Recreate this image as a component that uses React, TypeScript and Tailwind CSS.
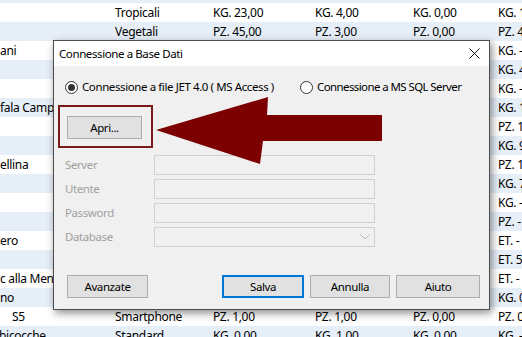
import React from "react";

type Row = { n: string; c: string; a: string; b: string; d: string; e: string; nShift?: string };

const rows: Row[] = [
  { n: "", c: "", a: "", b: "", d: "", e: "" },
  { n: "", c: "Tropicali", a: "KG. 23,00", b: "KG. 4,00", d: "KG. 0,00", e: "KG. 1" },
  { n: "", c: "Vegetali", a: "PZ. 45,00", b: "PZ. 3,00", d: "PZ. 0,00", e: "PZ. 4" },
  { n: "ani", c: "", a: "", b: "", d: "", e: "KG. -" },
  { n: "", c: "", a: "", b: "", d: "", e: "KG. 4" },
  { n: "", c: "", a: "", b: "", d: "", e: "KG. -" },
  { n: "fala Camp", c: "", a: "", b: "", d: "", e: "KG. 1" },
  { n: "", c: "", a: "", b: "", d: "", e: "PZ. 1" },
  { n: "", c: "", a: "", b: "", d: "", e: "KG. 9" },
  { n: "ellina", c: "", a: "", b: "", d: "", e: "PZ. 1" },
  { n: "", c: "", a: "", b: "", d: "", e: "KG. 7" },
  { n: "", c: "", a: "", b: "", d: "", e: "KG. -" },
  { n: "", c: "", a: "", b: "", d: "", e: "PZ. -" },
  { n: "ero", c: "", a: "", b: "", d: "", e: "ET. -" },
  { n: "", c: "", a: "", b: "", d: "", e: "ET. 5" },
  { n: "c alla Menta", c: "", a: "", b: "", d: "", e: "ET. -" },
  { n: "no", c: "", a: "", b: "", d: "", e: "KG. 0" },
  { n: "S5", c: "Smartphone", a: "PZ. 1,00", b: "PZ. 1,00", d: "PZ. 0,00", e: "PZ. 0", nShift: "pl-[12px]" },
  { n: "bicocche", c: "Standard", a: "KG. 0,00", b: "KG. 1,00", d: "KG. 0,00", e: "KG. -", nShift: "ml-[-1px]" },
];

function Background() {
  return (
    <div className="flex flex-col mt-[-16px] tracking-[-0.3px]">
      {rows.map((r, i) => (
        <div
          key={i}
          className={
            "h-[19px] shrink-0 grid grid-cols-[115px_98px_102px_98px_85px_1fr] items-center whitespace-nowrap text-[12px] text-black " +
            (i % 2 === 0 ? "bg-[#e6eef8]" : "bg-white")
          }
        >
          <div className={"overflow-visible " + (r.nShift ?? "")}>{r.n}</div>
          <div>{r.c}</div>
          <div>{r.a}</div>
          <div>{r.b}</div>
          <div>{r.d}</div>
          <div>{r.e}</div>
        </div>
      ))}
    </div>
  );
}

function Radio({ checked }: { checked?: boolean }) {
  return (
    <span className="w-[13px] h-[13px] rounded-full border border-[#333333] bg-white flex items-center justify-center shrink-0">
      {checked && <span className="w-[7px] h-[7px] rounded-full bg-[#333333]" />}
    </span>
  );
}

function WinButton({ label, w, focused }: { label: string; w: string; focused?: boolean }) {
  return (
    <div
      className={
        "h-[23px] flex items-center justify-center bg-[#e1e1e1] text-black " +
        w +
        " " +
        (focused ? "border-2 border-[#0078d7]" : "border border-[#adadad]")
      }
    >
      {label}
    </div>
  );
}

function Field({ label, combo }: { label: string; combo?: boolean }) {
  return (
    <div className="flex items-center h-[20px]">
      <div className="w-[89px] text-[#a0a0a0]">{label}</div>
      <div className="w-[221px] h-[20px] border border-[#d0d0d0] bg-[#f0f0f0] flex items-center justify-end pr-[4px]">
        {combo && (
          <svg width="10" height="6" viewBox="0 0 10 6">
            <path d="M0.5 0.5 L5 5 L9.5 0.5" fill="none" stroke="#b8b8b8" strokeWidth="1" />
          </svg>
        )}
      </div>
    </div>
  );
}

function Dialog() {
  return (
    <div className="absolute left-[53px] top-[40px] w-[437px] h-[270px] border border-[#4d4d4d] shadow-[2px_3px_8px_rgba(0,0,0,0.45)] bg-[#f0f0f0] flex flex-col tracking-[-0.4px]">
      <div className="h-[25px] bg-white flex items-center pl-[5px] pr-[9px] justify-between shrink-0">
        <span className="text-[11.5px] text-black">Connessione a Base Dati</span>
        <svg width="11" height="11" viewBox="0 0 11 11">
          <path d="M0.5 0.5 L10.5 10.5 M10.5 0.5 L0.5 10.5" stroke="#111" strokeWidth="1" />
        </svg>
      </div>
      <div className="flex flex-col pt-[14px] text-[11.5px] text-black">
        <div className="flex items-center h-[14px] pl-[11px]">
          <Radio checked />
          <span className="ml-[4px] w-[218px] whitespace-nowrap">Connessione a file JET 4.0 ( MS Access )</span>
          <Radio />
          <span className="ml-[4px] whitespace-nowrap tracking-[-0.6px]">Connessione a MS SQL Server</span>
        </div>
        <div className="mt-[11px] ml-[4px] w-[95px] h-[43px] border-2 border-[#7a1a1a] pl-[7px] pt-[9px]">
          <WinButton label="Apri..." w="w-[75px]" />
        </div>
        <div className="mt-[7px] ml-[11px] flex flex-col gap-[4px]">
          <Field label="Server" />
          <Field label="Utente" />
          <Field label="Password" />
          <Field label="Database" combo />
        </div>
        <div className="mt-[28px] flex items-center pl-[13px]">
          <WinButton label="Avanzate" w="w-[81px]" />
          <div className="ml-[74px] flex gap-[6px]">
            <WinButton label="Salva" w="w-[82px]" focused />
            <WinButton label="Annulla" w="w-[80px]" />
            <WinButton label="Aiuto" w="w-[84px]" />
          </div>
        </div>
      </div>
    </div>
  );
}

export default function App() {
  return (
    <div
      className="relative w-[522px] h-[337px] overflow-hidden bg-white"
      style={{ fontFamily: '"Noto Sans", "Open Sans", sans-serif' }}
    >
      <Background />
      <Dialog />
      <svg className="absolute left-0 top-0 pointer-events-none" width="522" height="337" viewBox="0 0 522 337">
        <polygon
          points="156,130 268,97 267,115 382,115 382,141 263,141 260,164"
          fill="#7d0000"
        />
      </svg>
    </div>
  );
}
